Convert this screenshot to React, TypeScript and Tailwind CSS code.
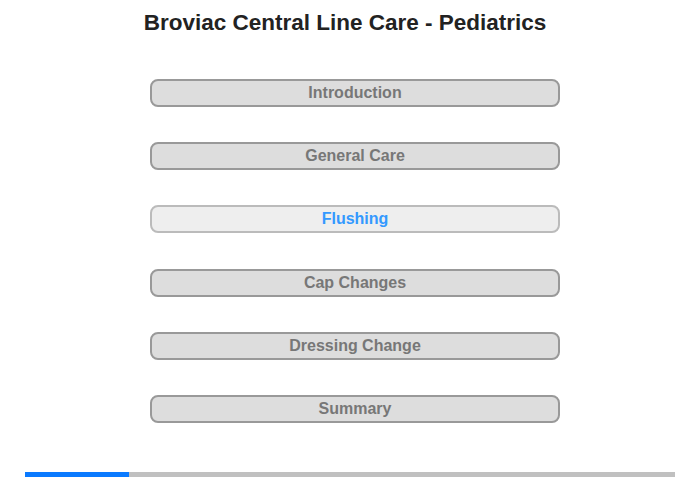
import React from "react";

const items = ["Introduction", "General Care", "Flushing", "Cap Changes", "Dressing Change", "Summary"];

export default function App() {
  return (
    <div className="w-[700px] h-[480px] bg-white flex flex-col" style={{ fontFamily: '"Liberation Sans", Arial, sans-serif' }}>
      <h1 className="pt-[10px] w-[690px] text-center text-[22.5px] leading-[26px] font-bold text-[#222]">
        Broviac Central Line Care - Pediatrics
      </h1>
      <div className="mt-[43px] pl-[150px] flex flex-col gap-[35.2px]">
        {items.map((t) => {
          const active = t === "Flushing";
          return (
            <div
              key={t}
              className={
                active
                  ? "w-[410px] h-[28px] rounded-[8px] border-2 border-[#bbb] bg-[#eee] flex items-center justify-center text-[16px] font-bold text-[#3399ff]"
                  : "w-[410px] h-[28px] rounded-[8px] border-2 border-[#999] bg-[#ddd] flex items-center justify-center text-[16px] font-bold text-[#777]"
              }
            >
              {t}
            </div>
          );
        })}
      </div>
      <div className="mt-auto mb-[3px] mx-[25px] h-[5px] bg-[#c0c0c0] flex">
        <div className="w-[104px] h-full bg-[#0a7aff]" />
      </div>
    </div>
  );
}
